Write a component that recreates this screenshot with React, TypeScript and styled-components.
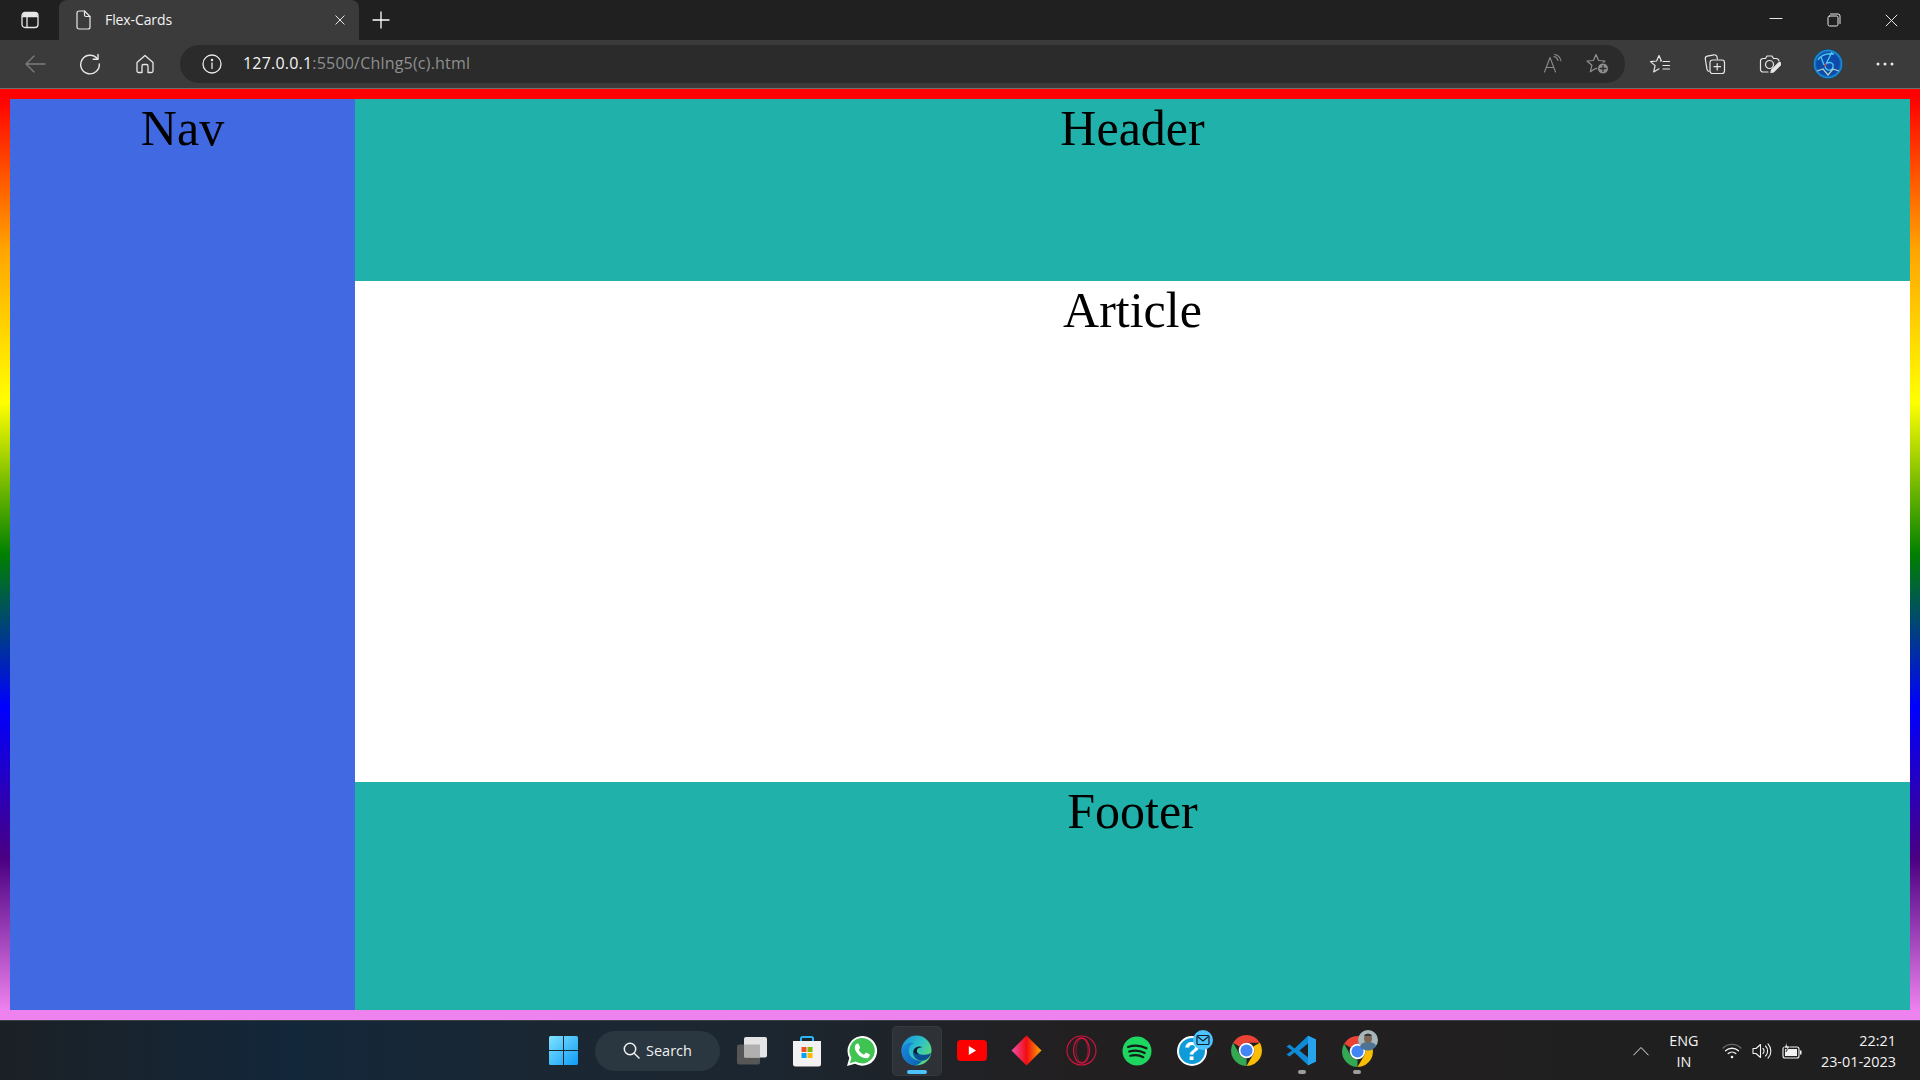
import React from "react";
import styled, { createGlobalStyle } from "styled-components";

const Global = createGlobalStyle`
  html, body { margin: 0; padding: 0; height: 100%; overflow: hidden; background: #202020; }
  #root { height: 100%; }
  * { box-sizing: border-box; }
`;

const Screen = styled.div`
  width: 1920px;
  height: 1080px;
  display: flex;
  flex-direction: column;
  font-family: "Open Sans", "Noto Sans", sans-serif;
  overflow: hidden;
`;

const TabStrip = styled.div`
  height: 40px;
  flex: none;
  display: flex;
  align-items: stretch;
  background: #202020;
  color: #fff;
`;

const TabMenu = styled.div`
  width: 59px;
  display: flex;
  align-items: center;
  justify-content: center;
`;

const Tab = styled.div`
  width: 300px;
  display: flex;
  align-items: center;
  padding: 0 14px 0 15px;
  background: #3b3b3b;
  border-radius: 8px 8px 0 0;
`;

const TabTitle = styled.span`
  flex: 1;
  margin-left: 13px;
  font-size: 14px;
  letter-spacing: -0.1px;
  color: #f3f3f3;
  font-family: "Open Sans", sans-serif;
  margin-top: -1px;
`;

const NewTab = styled.div`
  width: 44px;
  display: flex;
  align-items: center;
  justify-content: center;
`;

const Spacer = styled.div`
  flex: 1;
`;

const WindowButton = styled.div`
  width: 57.5px;
  display: flex;
  align-items: center;
  justify-content: center;
`;

const Toolbar = styled.div`
  height: 49px;
  flex: none;
  display: flex;
  align-items: center;
  padding: 0 8px 1px 7px;
  background: #3b3b3b;
  border-bottom: 1px solid #6e6e6e;
`;

const ToolSlot = styled.div<{ $w?: number }>`
  width: ${(p) => p.$w ?? 55}px;
  height: 38px;
  flex: none;
  display: flex;
  align-items: center;
  justify-content: center;
`;

const AddressBar = styled.div`
  flex: 1;
  height: 38px;
  margin: 0 7px 0 8px;
  padding: 0 5px 0 22px;
  display: flex;
  align-items: center;
  background: #2b2b2b;
  border-radius: 19px;
`;

const Url = styled.div`
  flex: 1;
  margin-left: 21px;
  margin-top: -2px;
  font-size: 16px;
  letter-spacing: 0.2px;
  color: #8f8f8f;
  font-family: "Open Sans", sans-serif;
  strong {
    font-weight: 400;
    color: #f5f5f5;
  }
`;

const AddressAction = styled.div`
  width: 45px;
  display: flex;
  justify-content: center;
`;

const Frame = styled.div`
  flex: 1;
  min-height: 0;
  display: flex;
  border: 10px solid;
  border-image: linear-gradient(to bottom, red, orange, yellow, green, blue, indigo, violet) 1;
  font-family: "Liberation Serif", "Times New Roman", serif;
  font-size: 50px;
  line-height: 58px;
  color: #000;
  text-align: center;
`;

const Nav = styled.nav`
  width: 345px;
  flex: none;
  background: royalblue;
`;

const Main = styled.div`
  flex: 1;
  display: flex;
  flex-direction: column;
`;

const Band = styled.section<{ $grow: number; $bg: string }>`
  flex: ${(p) => p.$grow} 0 0;
  background: ${(p) => p.$bg};
`;

const Taskbar = styled.div`
  height: 60px;
  flex: none;
  display: grid;
  grid-template-columns: 1fr auto 1fr;
  align-items: center;
  background: linear-gradient(90deg, #1b2025 0%, #13273a 15%, #1a2733 28%, #1c2630 40%, #221f20 56%, #1f1f1f 100%);
  border-top: 1px solid #3c3f48;
  color: #fff;
`;

const TaskIcons = styled.div`
  grid-column: 2;
  display: flex;
  align-items: center;
  height: 100%;
`;

const TaskSlot = styled.div<{ $active?: boolean; $w?: number }>`
  position: relative;
  width: ${(p) => p.$w ?? 55}px;
  height: 50px;
  display: flex;
  align-items: center;
  justify-content: center;
  ${(p) =>
    p.$active &&
    `&::before {
      content: "";
      position: absolute;
      left: 2.5px;
      right: 2.5px;
      top: 0;
      bottom: 0;
      background: rgba(255,255,255,0.07);
      border: 1px solid rgba(255,255,255,0.04);
      border-radius: 5px;
    }`}
  svg { position: relative; }
`;

const RunDot = styled.span<{ $active?: boolean }>`
  position: absolute;
  left: 50%;
  bottom: 2px;
  transform: translateX(-50%);
  width: ${(p) => (p.$active ? 20 : 8)}px;
  height: 4px;
  border-radius: 2px;
  background: ${(p) => (p.$active ? "#4cc2ff" : "#9d9d9d")};
`;

const SearchPill = styled.div`
  width: 125px;
  height: 40px;
  margin: 0 4px;
  display: flex;
  align-items: center;
  justify-content: center;
  gap: 6px;
  background: #2a3640;
  border-radius: 20px;
  font-size: 14.5px;
  color: #f0f0f0;
`;

const Tray = styled.div`
  grid-column: 3;
  display: flex;
  align-items: center;
  justify-content: flex-end;
  height: 100%;
  padding-right: 24px;
  color: #f2f2f2;
  font-size: 14.4px;
  line-height: 21px;
`;

const TrayLang = styled.div`
  width: 44px;
  margin: 0 16px 0 13px;
  text-align: center;
`;

const TrayIcons = styled.div`
  display: flex;
  align-items: center;
  gap: 10px;
  margin-right: 19px;
`;

const Clock = styled.div`
  text-align: right;
`;

const stroke = { fill: "none", stroke: "currentColor", strokeLinecap: "round" as const, strokeLinejoin: "round" as const };

const Ico = styled.svg<{ $c?: string }>`
  display: block;
  flex: none;
  color: ${(p) => p.$c ?? "#e8e8e8"};
`;

const TabsIcon = () => (
  <Ico width="20" height="20" viewBox="0 0 20 20" {...stroke} strokeWidth="1.3">
    <rect x="2" y="2.5" width="16" height="15" rx="3" />
    <path d="M2.5 6.5h15M7 6.5v10.5" />
    <rect x="2.5" y="3" width="15" height="3.5" rx="1.5" fill="#e8e8e8" stroke="none" />
  </Ico>
);
const DocIcon = () => (
  <Ico width="18" height="20" viewBox="0 0 18 20" {...stroke} strokeWidth="1.2">
    <path d="M3 3a2 2 0 0 1 2-2h5.5L16 6.5V17a2 2 0 0 1-2 2H5a2 2 0 0 1-2-2z" />
    <path d="M10.5 1v4a1.5 1.5 0 0 0 1.5 1.5h4" />
  </Ico>
);
const CloseIcon = ({ s = 12 }: { s?: number }) => (
  <Ico width={s} height={s} viewBox="0 0 12 12" {...stroke} strokeWidth={12 / s}>
    <path d="M1 1l10 10M11 1L1 11" />
  </Ico>
);
const PlusIcon = () => (
  <Ico width="18" height="18" viewBox="0 0 18 18" {...stroke} strokeWidth="1.3" $c="#fff">
    <path d="M9 1v16M1 9h16" />
  </Ico>
);
const MinIcon = () => (
  <Ico width="14" height="14" viewBox="0 0 14 14" {...stroke} strokeWidth="1">
    <path d="M1 5.5h12" />
  </Ico>
);
const RestoreIcon = () => (
  <Ico width="14" height="14" viewBox="0 0 14 14" {...stroke} strokeWidth="1">
    <rect x="1" y="3" width="10" height="10" rx="1.6" />
    <path d="M3.5 1h7.5a2 2 0 0 1 2 2v7.5" />
  </Ico>
);
const BackIcon = () => (
  <Ico width="22" height="20" viewBox="0 0 22 20" {...stroke} strokeWidth="1.3" $c="#7d7d7d">
    <path d="M21 10H2M10 2l-8 8 8 8" />
  </Ico>
);
const RefreshIcon = () => (
  <Ico width="22" height="22" viewBox="0 0 22 22" {...stroke} strokeWidth="1.4">
    <path d="M18.5 6A9.3 9.3 0 1 0 20.3 11" />
    <path d="M19 1.5V6.3h-4.8" />
  </Ico>
);
const HomeIcon = () => (
  <Ico width="20" height="20" viewBox="0 0 20 20" {...stroke} strokeWidth="1.3">
    <path d="M2 8.5L10 1.5l8 7V17a1.5 1.5 0 0 1-1.5 1.5H13V12a1.5 1.5 0 0 0-1.5-1.5h-3A1.5 1.5 0 0 0 7 12v6.5H3.5A1.5 1.5 0 0 1 2 17z" />
  </Ico>
);
const InfoIcon = () => (
  <Ico width="20" height="20" viewBox="0 0 20 20" {...stroke} strokeWidth="1.3">
    <circle cx="10" cy="10" r="9" />
    <path d="M10 9v5.5" />
    <circle cx="10" cy="6" r=".6" fill="currentColor" />
  </Ico>
);
const ReadIcon = () => (
  <Ico width="20" height="20" viewBox="0 0 20 20" {...stroke} strokeWidth="1.1" $c="#8a8a8a">
    <path d="M1.5 18L7 3.5 12.5 18M3.2 13.5h7.6" />
    <path d="M11 2.5a5.5 5.5 0 0 1 4 4M11.5 .5a8 8 0 0 1 6.5 6.5" />
  </Ico>
);
const FavAddIcon = () => (
  <Ico width="24" height="22" viewBox="0 0 24 22" {...stroke} strokeWidth="1.2" $c="#8f8f8f">
    <path d="M10 1.5l2.6 6 6.4.5-4.9 4.2 1.5 6.3L10 15.2 4.3 18.8l1.6-6.5L1 8l6.4-.5z" />
    <circle cx="17" cy="15.5" r="5.5" fill="#8f8f8f" stroke="#2b2b2b" strokeWidth="1" />
    <path d="M17 12.7v5.6M14.2 15.5h5.6" stroke="#2b2b2b" strokeWidth="1.3" />
  </Ico>
);
const FavListIcon = () => (
  <Ico width="22" height="20" viewBox="0 0 22 20" {...stroke} strokeWidth="1.2">
    <path d="M10 1.5l2.4 5.5h-1M14 7.5h6.5M14 11.5h6.5M14 15h6.5M10 1.5L7.6 7 1.5 7.6l4.6 4L4.7 18l5.3-3.2" />
  </Ico>
);
const CollectIcon = () => (
  <Ico width="22" height="22" viewBox="0 0 22 22" {...stroke} strokeWidth="1.2">
    <path d="M5 18.5a2.5 2.5 0 0 1-2-2.2L1.3 6a2.5 2.5 0 0 1 2-2.8L10 1.800a2.5 2.5 0 0 1 3 2l.4 2" />
    <rect x="6" y="7" width="14.5" height="13.5" rx="2.5" />
    <path d="M13.2 10.5v6.5M10 13.7h6.5" />
  </Ico>
);
const ShotIcon = () => (
  <Ico width="22" height="20" viewBox="0 0 22 20" {...stroke} strokeWidth="1.2">
    <path d="M9 18H4a2.5 2.5 0 0 1-2.5-2.5V7A2.5 2.5 0 0 1 4 4.5h2.5L8 2h5l1.5 2.5H17A3 3 0 0 1 20 7" />
    <circle cx="10.5" cy="10.5" r="4" />
    <path d="M12 18.5l.6-2.6 7-7a1.4 1.4 0 0 1 2 2l-7 7z" fill="currentColor" />
  </Ico>
);
const MenuIcon = () => (
  <Ico width="18" height="4" viewBox="0 0 18 4" fill="#e8e8e8">
    <circle cx="2" cy="2" r="1.5" />
    <circle cx="9" cy="2" r="1.5" />
    <circle cx="16" cy="2" r="1.5" />
  </Ico>
);
const AvatarIcon = () => (
  <Ico width="30" height="30" viewBox="0 0 30 30">
    <defs>
      <radialGradient id="av" cx="50%" cy="50%" r="52%">
        <stop offset="0%" stopColor="#0c4fb4" />
        <stop offset="72%" stopColor="#0d4aa6" />
        <stop offset="88%" stopColor="#1c8fd6" />
        <stop offset="100%" stopColor="#07152e" />
      </radialGradient>
    </defs>
    <circle cx="15" cy="15" r="15" fill="url(#av)" />
    <path d="M5 11C8 6 13 4 21 5M19 3l-6 12M12 16c3-4 9-3 8 2s-8 4-8-2zM8 8l3 8" fill="none" stroke="#4fc8f2" strokeWidth="1.3" />
    <path d="M4 22l6-2 5 6 5-6 6 2" fill="none" stroke="#b5d0c0" strokeWidth="1.3" />
    <path d="M11.500 17.500l1.500-3" stroke="#e0242c" strokeWidth="1.2" />
  </Ico>
);

const WinIcon = () => (
  <Ico width="29" height="29" viewBox="0 0 29 29">
    <defs>
      <linearGradient id="win" x1="0" y1="0" x2="1" y2="1">
        <stop offset="0%" stopColor="#7fe3ff" />
        <stop offset="100%" stopColor="#0f9bf5" />
      </linearGradient>
    </defs>
    <path d="M1.5 0H14v14H0V1.5A1.5 1.5 0 0 1 1.5 0zM15 0h12.5A1.5 1.5 0 0 1 29 1.5V14H15zM0 15h14v14H1.5A1.5 1.5 0 0 1 0 27.500zM15 15h14v12.500a1.5 1.5 0 0 1-1.500 1.500H15z" fill="url(#win)" />
  </Ico>
);
const SearchIcon = () => (
  <Ico width="17" height="17" viewBox="0 0 17 17" {...stroke} strokeWidth="1.5" $c="#f0f0f0">
    <circle cx="7" cy="7" r="5.7" />
    <path d="M11.2 11.2L16 16" />
  </Ico>
);
const TaskViewIcon = () => (
  <Ico width="32" height="30" viewBox="0 0 32 30">
    <rect x="1" y="8.500" width="23" height="20" rx="2" fill="#565656" />
    <rect x="8" y="1" width="23" height="20.500" rx="2" fill="#e4e4e4" />
    <rect x="8" y="8.500" width="16" height="13" fill="#b0b0b0" />
  </Ico>
);
const StoreIcon = () => (
  <Ico width="30" height="32" viewBox="0 0 30 32">
    <path d="M9 7V3.500A1.500 1.500 0 0 1 10.500 2h9A1.500 1.500 0 0 1 21 3.500V7" fill="none" stroke="#29b6f6" strokeWidth="2" />
    <path d="M1 6h28v23a2.500 2.500 0 0 1-2.500 2.500h-23A2.500 2.500 0 0 1 1 29z" fill="#f2f2f2" />
    <rect x="9.500" y="12" width="5" height="5" fill="#f25022" />
    <rect x="15.500" y="12" width="5" height="5" fill="#7fba00" />
    <rect x="9.500" y="18" width="5" height="5" fill="#00a4ef" />
    <rect x="15.500" y="18" width="5" height="5" fill="#ffb900" />
  </Ico>
);
const WhatsappIcon = () => (
  <Ico width="32" height="32" viewBox="0 0 32 32">
    <path d="M1 31l2.300-8A14.800 14.800 0 1 1 9 28.800z" fill="#fff" />
    <path d="M3.800 28.200l1.700-5.500A12.700 12.700 0 1 1 9.600 26.600z" fill="#3fc351" />
    <path d="M11.500 8.500c.6 0 1 0 1.300.8l1.200 2.900c.2.500 0 .8-.3 1.200l-.8 1c-.2.300-.2.500 0 .8 1.100 1.900 2.700 3.300 4.800 4.200.3.100.5.100.7-.1l1.100-1.300c.3-.4.600-.4 1-.2l2.700 1.300c.5.200.6.400.6.800 0 2-1.800 3.400-3.600 3.400-5.400 0-11.400-5.700-11.400-10.700 0-1.700.8-4.100 2.700-4.100z" fill="#fff" />
  </Ico>
);
const EdgeIcon = () => (
  <Ico width="31" height="31" viewBox="0 0 31 31">
    <defs>
      <linearGradient id="edgeA" x1="0" y1="0" x2="1" y2=".7">
        <stop offset="0%" stopColor="#0f8fd8" />
        <stop offset="55%" stopColor="#2fc1c9" />
        <stop offset="100%" stopColor="#5fdc6d" />
      </linearGradient>
      <linearGradient id="edgeB" x1="0" y1="0" x2="1" y2="1">
        <stop offset="0%" stopColor="#1b8be0" />
        <stop offset="100%" stopColor="#0d5fb0" />
      </linearGradient>
    </defs>
    <circle cx="15.500" cy="15.500" r="15" fill="url(#edgeA)" />
    <path d="M.5 15.500C2 9 8 7 13 8c-4 1.500-6 5-5 9.500 1 5 7 9 13.500 8-2 2-4 4-6.500 5C7 30.500.5 24 .5 15.500z" fill="url(#edgeB)" />
    <path d="M30.500 17c0 2-6 3.500-11 2.500-3-.6-4.500-3-3.500-5 1-2 3.500-2.800 5-2-2.500-1.500-7-1-8.500 2.500-1.800 4.500 1.500 9.500 6.500 10.500 5 1 10-2 11.500-8.500z" fill="#0b4f94" />
    <path d="M13 15c1.500-3.500 6-4.500 9-2.500-2-.5-5 0-6 2-.8 1.800 0 4 2.500 5-3-.2-7-1.500-5.500-4.500z" fill="#1a1a1f" />
  </Ico>
);
const YoutubeIcon = () => (
  <Ico width="30" height="21" viewBox="0 0 33 21" preserveAspectRatio="none">
    <rect width="33" height="21" rx="4" fill="#f00" />
    <path d="M13 6l8 4.500-8 4.500z" fill="#fff" />
  </Ico>
);
const DiamondIcon = () => (
  <Ico width="31" height="31" viewBox="0 0 31 31">
    <defs>
      <linearGradient id="dia" x1="0" y1="0" x2="1" y2="0">
        <stop offset="0%" stopColor="#f04fb0" />
        <stop offset="50%" stopColor="#f20d12" />
        <stop offset="100%" stopColor="#fba800" />
      </linearGradient>
    </defs>
    <path d="M15.500 .5L30.500 15.500 15.500 30.500 .5 15.500z" fill="url(#dia)" strokeLinejoin="round" />
  </Ico>
);
const OperaIcon = () => (
  <Ico width="31" height="31" viewBox="0 0 31 31" fill="none" stroke="#d4143f" strokeWidth="1.1">
    <circle cx="15.500" cy="15.500" r="14.500" />
    <ellipse cx="15.500" cy="15.500" rx="8" ry="12.500" strokeWidth="1.300" />
    <ellipse cx="16" cy="15.500" rx="6" ry="12" strokeWidth=".6" />
  </Ico>
);
const SpotifyIcon = () => (
  <Ico width="30" height="30" viewBox="0 0 30 30">
    <circle cx="15" cy="15" r="14.500" fill="#1ed760" />
    <path d="M6 11c6-2 13-1.500 18.500 1.300M7.200 15.500c5-1.500 11-1 15.500 1.500M8.300 19.700c4.500-1.100 9.300-.7 13 1.500" fill="none" stroke="#14191a" strokeWidth="2.200" strokeLinecap="round" />
  </Ico>
);
const HelpIcon = () => (
  <Ico width="40" height="40" viewBox="0 0 40 40" style={{ overflow: "visible" }}>
    <circle cx="20" cy="20" r="14" fill="#0f9ad8" stroke="#fff" strokeWidth="2" />
    <text x="20" y="29" fontSize="26" fontWeight="700" textAnchor="middle" fill="#fff" fontFamily="Liberation Sans, sans-serif">?</text>
    <circle cx="31" cy="9" r="10" fill="#4cc2ff" />
    <rect x="25" y="4.500" width="12" height="9" rx="1" fill="none" stroke="#10202c" strokeWidth="1.200" />
    <path d="M25.500 5.500L31 10l5.500-4.500" fill="none" stroke="#10202c" strokeWidth="1.200" />
  </Ico>
);
const ChromeSectors = () => (
  <>
    <path d="M4.950 13A22 22 0 0 1 43.050 13H24A11 11 0 0 0 14.470 18.500z" fill="#ea4335" />
    <path d="M4.950 13A22 22 0 0 1 43.050 13H24A11 11 0 0 0 14.470 18.500z" fill="#fbbc04" transform="rotate(120 24 24)" />
    <path d="M4.950 13A22 22 0 0 1 43.050 13H24A11 11 0 0 0 14.470 18.500z" fill="#34a853" transform="rotate(240 24 24)" />
    <circle cx="24" cy="24" r="11" fill="#fff" />
    <circle cx="24" cy="24" r="8.600" fill="#4285f4" />
  </>
);
const ChromeIcon = () => (
  <Ico width="31" height="31" viewBox="2 2 44 44">
    <ChromeSectors />
  </Ico>
);
const ChromeProfileIcon = () => (
  <Ico width="40" height="40" viewBox="0 0 40 40" style={{ overflow: "visible" }}>
    <svg x="5" y="5" width="31" height="31" viewBox="2 2 44 44">
      <ChromeSectors />
    </svg>
    <circle cx="31" cy="9" r="10" fill="#a7b6b8" />
    <path d="M23 16c1-4 4-5 8-5s7 1 8 4a10 10 0 0 1-16 1z" fill="#4f7397" />
    <ellipse cx="31" cy="7.500" rx="4" ry="5" fill="#7c6657" />
    <path d="M27 5c1-3 7-3 8 0z" fill="#33363a" />
  </Ico>
);
const VsCodeIcon = () => (
  <Ico width="31" height="31" viewBox="0 0 31 31">
    <path d="M22 .8L30 4.500v22L22 30.200 8.500 17.500l-5 4-3-2L6 15.500.5 11.500l3-2 5 4z" fill="#0e8ad6" />
    <path d="M22 8.500L13.500 15.500 22 22.500z" fill="#1f1f1f" />
    <path d="M22 .8L30 4.500v22L22 30.200z" fill="#27a3ec" />
  </Ico>
);
const ChevronIcon = () => (
  <Ico width="16" height="10" viewBox="0 0 16 10" {...stroke} strokeWidth="1">
    <path d="M.7 9L8 1.500 15.300 9" />
  </Ico>
);
const WifiIcon = () => (
  <Ico width="20" height="16" viewBox="0 0 20 16" fill="none" strokeLinecap="round" stroke="#f2f2f2" strokeWidth="1.300">
    <path d="M1 5a13 13 0 0 1 18 0" stroke="#6b6b6b" />
    <path d="M3.500 7.800a9.500 9.500 0 0 1 13 0M6.200 10.600a5.600 5.600 0 0 1 7.600 0" />
    <circle cx="10" cy="14" r="1.300" fill="#f2f2f2" stroke="none" />
  </Ico>
);
const VolumeIcon = () => (
  <Ico width="20" height="18" viewBox="0 0 20 18" {...stroke} strokeWidth="1.100" $c="#f2f2f2">
    <path d="M1 6.500h3l4.500-4v13l-4.500-4H1z" />
    <path d="M11 6.500a3.500 3.500 0 0 1 0 5M13.500 4a7 7 0 0 1 0 10M16 1.800a10.500 10.500 0 0 1 0 14.400" />
  </Ico>
);
const BatteryIcon = () => (
  <Ico width="20" height="18" viewBox="0 0 20 18">
    <rect x="1" y="5" width="16" height="11" rx="2" fill="none" stroke="#f2f2f2" strokeWidth="1.100" />
    <rect x="3" y="7" width="12" height="7" fill="#f2f2f2" />
    <rect x="18" y="8.500" width="1.500" height="4" fill="#f2f2f2" />
    <path d="M5 .5L2 6h3L4 10l4-6H5z" fill="#f2f2f2" stroke="#1f1f1f" strokeWidth=".6" />
  </Ico>
);

export default function App() {
  return (
    <Screen>
      <Global />
      <TabStrip>
        <TabMenu><TabsIcon /></TabMenu>
        <Tab>
          <DocIcon />
          <TabTitle>Flex-Cards</TabTitle>
          <CloseIcon s={10} />
        </Tab>
        <NewTab><PlusIcon /></NewTab>
        <Spacer />
        <WindowButton><MinIcon /></WindowButton>
        <WindowButton><RestoreIcon /></WindowButton>
        <WindowButton><CloseIcon s={13} /></WindowButton>
      </TabStrip>
      <Toolbar>
        <ToolSlot><BackIcon /></ToolSlot>
        <ToolSlot><RefreshIcon /></ToolSlot>
        <ToolSlot><HomeIcon /></ToolSlot>
        <AddressBar>
          <InfoIcon />
          <Url><strong>127.0.0.1</strong>:5500/Chlng5(c).html</Url>
          <AddressAction><ReadIcon /></AddressAction>
          <AddressAction><FavAddIcon /></AddressAction>
        </AddressBar>
        <ToolSlot><FavListIcon /></ToolSlot>
        <ToolSlot><CollectIcon /></ToolSlot>
        <ToolSlot><ShotIcon /></ToolSlot>
        <ToolSlot $w={61}><AvatarIcon /></ToolSlot>
        <ToolSlot $w={54}><MenuIcon /></ToolSlot>
      </Toolbar>
      <Frame>
        <Nav>Nav</Nav>
        <Main>
          <Band $grow={20} $bg="lightseagreen">Header</Band>
          <Band $grow={55} $bg="#fff">Article</Band>
          <Band $grow={25} $bg="lightseagreen">Footer</Band>
        </Main>
      </Frame>
      <Taskbar>
        <TaskIcons>
          <TaskSlot><WinIcon /></TaskSlot>
          <SearchPill><SearchIcon />Search</SearchPill>
          <TaskSlot><TaskViewIcon /></TaskSlot>
          <TaskSlot><StoreIcon /></TaskSlot>
          <TaskSlot><WhatsappIcon /></TaskSlot>
          <TaskSlot $active><EdgeIcon /><RunDot $active /></TaskSlot>
          <TaskSlot><YoutubeIcon /></TaskSlot>
          <TaskSlot><DiamondIcon /></TaskSlot>
          <TaskSlot><OperaIcon /></TaskSlot>
          <TaskSlot><SpotifyIcon /></TaskSlot>
          <TaskSlot><HelpIcon /></TaskSlot>
          <TaskSlot><ChromeIcon /></TaskSlot>
          <TaskSlot><VsCodeIcon /><RunDot /></TaskSlot>
          <TaskSlot><ChromeProfileIcon /><RunDot /></TaskSlot>
        </TaskIcons>
        <Tray>
          <ChevronIcon />
          <TrayLang>ENG<br />IN</TrayLang>
          <TrayIcons>
            <WifiIcon />
            <VolumeIcon />
            <BatteryIcon />
          </TrayIcons>
          <Clock>22:21<br />23-01-2023</Clock>
        </Tray>
      </Taskbar>
    </Screen>
  );
}
